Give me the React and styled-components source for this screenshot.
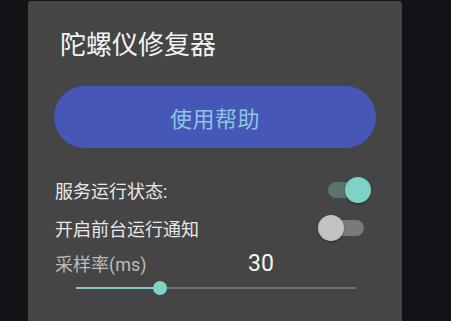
import React from "react";
import styled, { createGlobalStyle } from "styled-components";

const Global = createGlobalStyle`
  html, body { margin: 0; padding: 0; background: #131418; overflow: hidden; }
  body { font-family: Roboto, "Noto Sans CJK SC", sans-serif; }
`;

const Screen = styled.div`
  width: 451px;
  height: 321px;
  padding: 1px 0 0 28px;
  box-sizing: border-box;
  overflow: hidden;
`;

const Dialog = styled.div`
  width: 374px;
  height: 360px;
  background: #454545;
  border-radius: 3px 3px 0 0;
  padding: 0 26px;
  box-sizing: border-box;
  display: flex;
  flex-direction: column;
`;

const Title = styled.h1`
  margin: 27px 0 0 0;
  padding-left: 6px;
  height: 30px;
  line-height: 30px;
  font-size: 26px;
  font-weight: 400;
  color: #f4f4f4;
  font-family: "Noto Sans CJK SC", sans-serif;
`;

const HelpButton = styled.button`
  margin-top: 28px;
  height: 62px;
  width: 100%;
  border: none;
  border-radius: 31px;
  background: #4757b8;
  color: #8cc6e2;
  font-size: 22px;
  font-family: "Noto Sans CJK SC", sans-serif;
  letter-spacing: 0.5px;
  padding: 0;
`;

const Row = styled.div`
  display: flex;
  align-items: center;
  justify-content: space-between;
  height: 38px;
  margin-top: ${(p) => p.$top || 0}px;
  padding: 0 5px 0 1px;
`;

const Label = styled.span`
  font-size: 18px;
  color: ${(p) => (p.$dim ? "#bcbcbc" : "#e8e8e8")};
  font-family: Roboto, "Noto Sans CJK SC", sans-serif;
`;

const SwitchBox = styled.div`
  position: relative;
  width: 53px;
  height: 26px;
`;

const Track = styled.div`
  position: absolute;
  left: 10px;
  right: 7px;
  top: 5px;
  height: 16px;
  border-radius: 8px;
  background: ${(p) => (p.$on ? "#5a746d" : "#7a7a7a")};
`;

const Thumb = styled.div`
  position: absolute;
  top: 0;
  ${(p) => (p.$on ? "right: 0;" : "left: 0;")}
  width: 26px;
  height: 26px;
  border-radius: 50%;
  background: ${(p) => (p.$on ? "#7fd2c8" : "#c2c2c2")};
  box-shadow: 0 1px 2px rgba(0, 0, 0, 0.35);
`;

const Switch = ({ on }) => (
  <SwitchBox>
    <Track $on={on} />
    <Thumb $on={on} />
  </SwitchBox>
);

const RateRow = styled.div`
  display: grid;
  grid-template-columns: 193px auto;
  align-items: center;
  height: 30px;
  margin-top: 1px;
  padding-left: 1px;
`;

const Value = styled.span`
  font-size: 23px;
  color: #f6f6f6;
  font-family: Roboto, sans-serif;
`;

const SliderBox = styled.div`
  position: relative;
  height: 20px;
  margin: 0 20px 0 22px;
`;

const SliderRail = styled.div`
  position: absolute;
  left: 0;
  right: 0;
  top: 9px;
  height: 2px;
  background: #707070;
`;

const SliderFill = styled.div`
  position: absolute;
  left: 0;
  top: 9px;
  height: 2px;
  background: #80cbc4;
`;

const SliderThumb = styled.div`
  position: absolute;
  top: 3px;
  width: 14px;
  height: 14px;
  margin-left: -7px;
  border-radius: 50%;
  background: #7fd2c8;
`;

const Slider = ({ value }) => (
  <SliderBox>
    <SliderRail />
    <SliderFill style={{ width: `${value * 100}%` }} />
    <SliderThumb style={{ left: `${value * 100}%` }} />
  </SliderBox>
);

export default function App() {
  return (
    <>
      <Global />
      <Screen>
        <Dialog>
          <Title>陀螺仪修复器</Title>
          <HelpButton>使用帮助</HelpButton>
          <Row $top={23}>
            <Label>服务运行状态:</Label>
            <Switch on />
          </Row>
          <Row>
            <Label>开启前台运行通知</Label>
            <Switch on={false} />
          </Row>
          <RateRow>
            <Label $dim>采样率(ms)</Label>
            <Value>30</Value>
          </RateRow>
          <Slider value={0.3} />
        </Dialog>
      </Screen>
    </>
  );
}
